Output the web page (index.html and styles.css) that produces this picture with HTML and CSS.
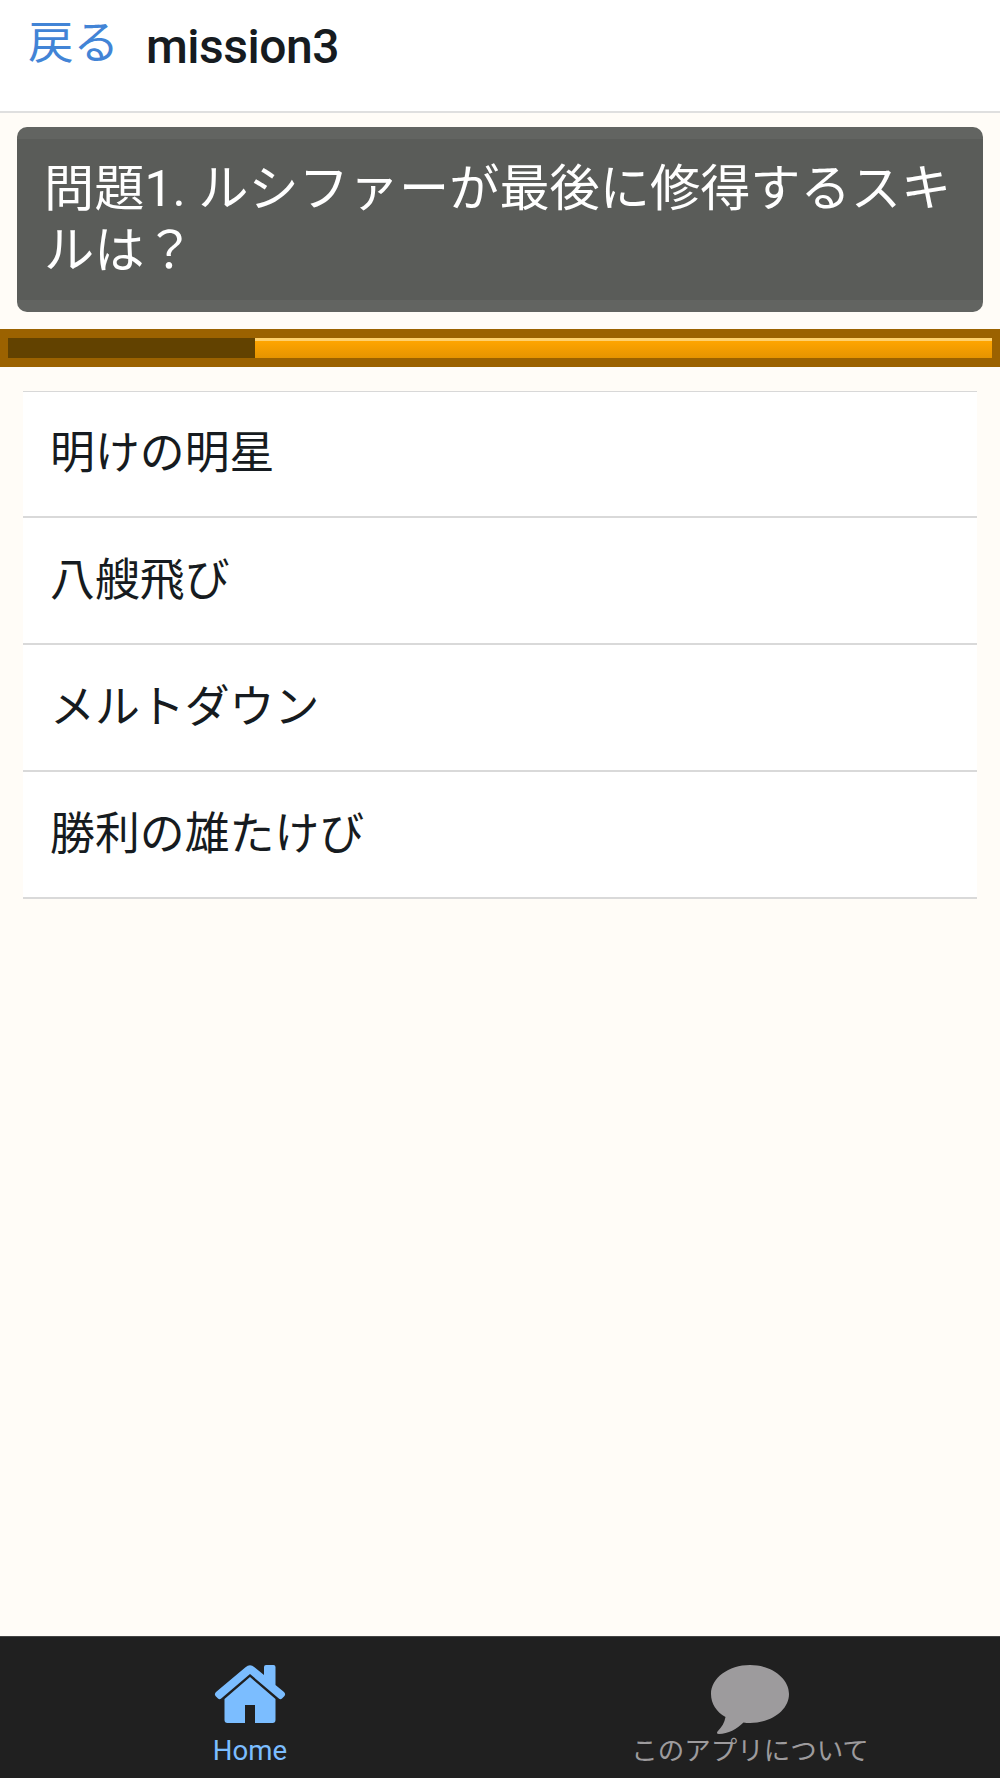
FILE: index.html
```html
<!DOCTYPE html>
<html lang="ja">
<head>
<meta charset="utf-8">
<title>mission3</title>
<link rel="stylesheet" href="styles.css">
</head>
<body>
<header class="header">
  <a class="back">戻る</a>
  <h1 class="title">mission3</h1>
</header>
<main class="main">
  <section class="question">問題1. ルシファーが最後に修得するスキルは？</section>
  <div class="timer"><div class="timer-used"></div><div class="timer-left"></div></div>
  <ul class="answers">
    <li class="answer">明けの明星</li>
    <li class="answer">八艘飛び</li>
    <li class="answer">メルトダウン</li>
    <li class="answer">勝利の雄たけび</li>
  </ul>
</main>
<nav class="tabs">
  <a class="tab tab-active">
    <svg class="icon" width="80" height="70" viewBox="0 0 80 70">
      <path fill="currentColor" d="M35.5 2.2Q40 -1.5 44.500 2.200L54 10V2Q54 0 56 0H63.500Q65.500 0 65.500 2V20L74 27Q76 29 74.500 31L72 33.500Q70.500 35 68.500 33.200L40 9L11.500 33.200Q9.500 35 8 33.500L5.500 31Q4 29 6 27Z"/>
      <path fill="currentColor" d="M40 12L65.500 34V55Q65.500 58 62.500 58H45V40H35V58H17.500Q14.500 58 14.500 55V34Z"/>
    </svg>
    <span class="label">Home</span>
  </a>
  <a class="tab">
    <svg class="icon" width="80" height="70" viewBox="0 0 80 70">
      <path fill="currentColor" d="M40 0C61.500 0 79 13 79 29S61.500 58 40 58Q36.500 58 33.500 57.500C27 64 18 69 9 69Q6 69 7.500 66.500C12 62 14.500 57.500 15.500 52C6.500 47 1 38.500 1 29C1 13 18.500 0 40 0Z"/>
    </svg>
    <span class="label label-ja">このアプリについて</span>
  </a>
</nav>
</body>
</html>
```
FILE: styles.css
```css
* { box-sizing: border-box; }
body {
  margin: 0;
  height: 1778px;
  display: flex;
  flex-direction: column;
  background: #fffcf7;
  color: #161b20;
  font-family: Roboto, "Noto Sans CJK JP", sans-serif;
  overflow: hidden;
}
.header {
  flex: none;
  height: 113px;
  padding: 0 28px;
  display: flex;
  align-items: flex-start;
  gap: 27px;
  background: #fff;
  border-bottom: 2px solid #dfdfdf;
}
.back {
  padding-top: 12px;
  color: #4284d6;
  font-size: 45.500px;
  line-height: 64px;
}
.title {
  margin: 0;
  padding-top: 15px;
  font-size: 48px;
  line-height: 64px;
  font-weight: 500;
  letter-spacing: -0.5px;
}
.main { flex: 1; }
.question {
  height: 185px;
  margin: 14px 17px 17px;
  padding: 31px 18px 0 27px;
  border-radius: 10px;
  background: linear-gradient(#626461 12px, #5a5c59 12px, #5a5c59 173px, #626461 173px);
  color: #fff;
  font-size: 50.200px;
  line-height: 62px;
}
.timer {
  height: 38px;
  padding: 9px 8px;
  display: flex;
  background: #9b6200;
}
.timer-used { width: 247px; background: #624200; }
.timer-left {
  flex: 1;
  background: linear-gradient(#ffd06b 3px, #ffa500 3px, #e59400);
}
.answers {
  margin: 24px 23px 0;
  padding: 0;
  list-style: none;
  border-top: 1px solid #d8d8d8;
}
.answer {
  height: 127px;
  padding: 0 27px;
  background: #fff;
  border-bottom: 2px solid #d9d9d9;
  font-size: 44.900px;
  line-height: 125px;
}
.answer:first-child { height: 126px; line-height: 123px; }
.tabs {
  flex: none;
  height: 142px;
  display: flex;
  background: #202020;
  border-top: 1px solid #444;
}
.tab {
  flex: 1;
  display: flex;
  flex-direction: column;
  align-items: center;
  padding-top: 28px;
  color: #9d9b9d;
}
.tab-active { color: #7bbdff; }
.icon { display: block; flex: none; }
.label { font-size: 27.600px; line-height: 32px; }
.label-ja { font-size: 26.500px; }
```
